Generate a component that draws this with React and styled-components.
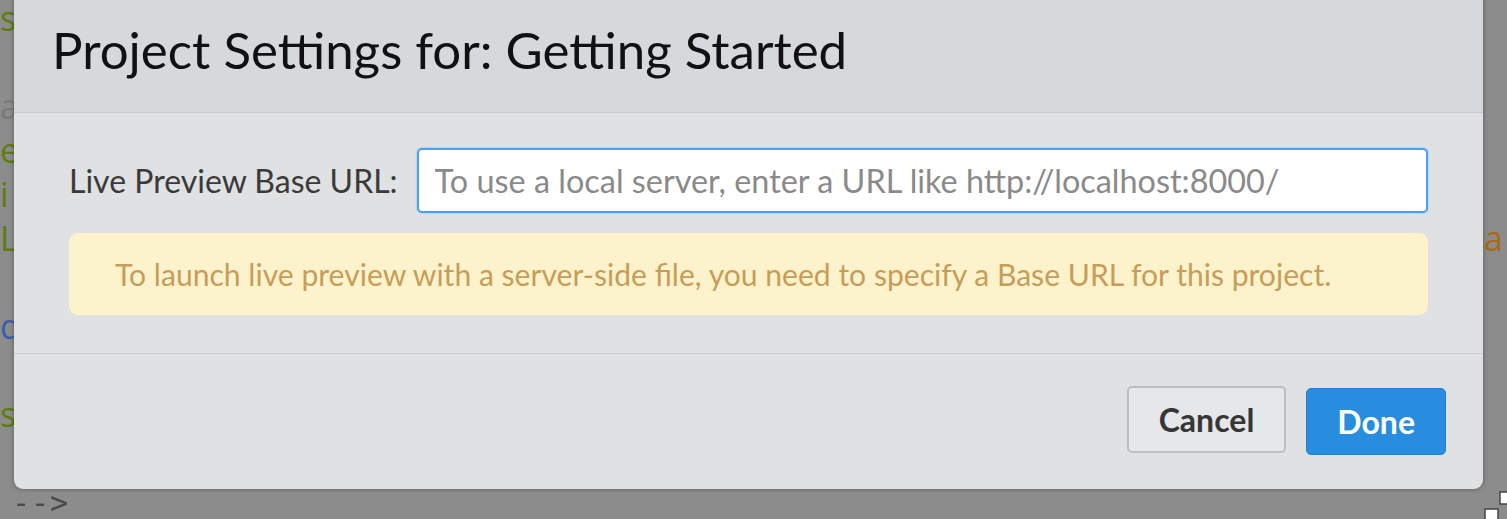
import React from "react"
import styled, { createGlobalStyle } from "styled-components"

const GlobalStyle = createGlobalStyle`
  html, body {
    margin: 0;
    padding: 0;
    background: #8c8c8c;
  }
`

const Screen = styled.div`
  position: relative;
  width: 1507px;
  height: 519px;
  overflow: hidden;
  background: #8c8c8c;
`

// editor text that sits behind the modal overlay
const Editor = styled.div`
  display: flex;
  flex-direction: column;
  margin-top: -4px;
  font-family: "Open Sans", "DejaVu Sans", sans-serif;
  font-size: 34px;
  white-space: pre;
`

const CodeLine = styled.div`
  display: flex;
  justify-content: space-between;
  align-items: center;
  height: 44px;
  padding-left: ${p => p.indent || 0}px;
  padding-right: 4px;
  color: ${p => p.color || "#5e7d10"};
`

const Tail = styled.span`
  color: #a86a12;
`

const Arrow = styled.span`
  color: #4a4a4a;
  font-family: "DejaVu Sans Mono", monospace;
  font-size: 30px;
  letter-spacing: 1px;
`

const Dialog = styled.div`
  position: absolute;
  top: -14px;
  left: 14px;
  width: 1469px;
  display: flex;
  flex-direction: column;
  background: #dfe1e2;
  border-radius: 0 0 9px 9px;
  box-shadow: 0 0 5px rgba(0, 0, 0, 0.35);
  font-family: Lato, "Open Sans", sans-serif;
`

const Header = styled.div`
  height: 126px;
  display: flex;
  align-items: center;
  padding: 0 38px;
  background: #d6d9db;
  border-bottom: 1px solid #c6c9cb;
`

const Title = styled.h1`
  margin: 0;
  font-weight: 400;
  font-size: 51px;
  color: #111;
`

const Body = styled.div`
  display: flex;
  flex-direction: column;
  gap: 20px;
  padding: 35px 55px 38px;
  border-bottom: 1px solid #cbcecf;
`

const Field = styled.div`
  display: flex;
  align-items: center;
  gap: 19px;
`

const Label = styled.label`
  font-size: 32px;
  color: #3a3a3a;
  white-space: nowrap;
`

const UrlInput = styled.input`
  flex: 1;
  height: 65px;
  box-sizing: border-box;
  padding: 0 16px;
  border: 2px solid #4aa0f5;
  border-radius: 5px;
  box-shadow: 0 0 2px #7cbaf7;
  background: #fff;
  font-family: inherit;
  font-size: 32.4px;
  outline: none;

  &::placeholder {
    color: #8a8a8a;
  }
`

const Warning = styled.div`
  height: 82px;
  display: flex;
  align-items: center;
  padding: 0 46px;
  box-sizing: border-box;
  border-radius: 9px;
  background: #fcf3cd;
  color: #c79d58;
  font-size: 30.1px;
`

const Footer = styled.div`
  display: flex;
  justify-content: flex-end;
  align-items: center;
  gap: 20px;
  padding: 33px 37px 35px;
`

const Button = styled.button`
  height: 67px;
  padding: 0 30px;
  border-radius: 5px;
  font-family: inherit;
  font-size: 32px;
  font-weight: 700;
  cursor: pointer;
  background: ${p => (p.primary ? "#288ddf" : "#e5e7e8")};
  color: ${p => (p.primary ? "#fff" : "#363636")};
  border: ${p => (p.primary ? "1px solid #2680cf" : "2px solid #bcbfc1")};
  transform: translateY(${p => (p.primary ? 1 : -1)}px);
`

const Handle = styled.svg`
  position: absolute;
  right: 0;
  bottom: 0;
`

export default function App() {
  return (
    <Screen>
      <GlobalStyle />
      <Editor>
        <CodeLine>s</CodeLine>
        <CodeLine />
        <CodeLine color="#7a7a7a">a</CodeLine>
        <CodeLine>e</CodeLine>
        <CodeLine>i</CodeLine>
        <CodeLine>
          L<Tail>a</Tail>
        </CodeLine>
        <CodeLine />
        <CodeLine color="#3b5cae">d</CodeLine>
        <CodeLine />
        <CodeLine>s</CodeLine>
        <CodeLine />
        <CodeLine indent={12}>
          <Arrow>--&gt;</Arrow>
        </CodeLine>
      </Editor>

      <Dialog>
        <Header>
          <Title>Project Settings for: Getting Started</Title>
        </Header>
        <Body>
          <Field>
            <Label>Live Preview Base URL:</Label>
            <UrlInput placeholder="To use a local server, enter a URL like http://localhost:8000/" />
          </Field>
          <Warning>
            To launch live preview with a server-side file, you need to specify a Base URL for this project.
          </Warning>
        </Body>
        <Footer>
          <Button>Cancel</Button>
          <Button primary>Done</Button>
        </Footer>
      </Dialog>

      <Handle width="26" height="30" viewBox="0 0 26 30">
        <rect x="19" y="3" width="12" height="12" fill="#fff" stroke="#444" strokeWidth="1.5" />
        <rect x="4" y="20" width="13" height="13" fill="#fff" stroke="#444" strokeWidth="1.5" />
      </Handle>
    </Screen>
  )
}
